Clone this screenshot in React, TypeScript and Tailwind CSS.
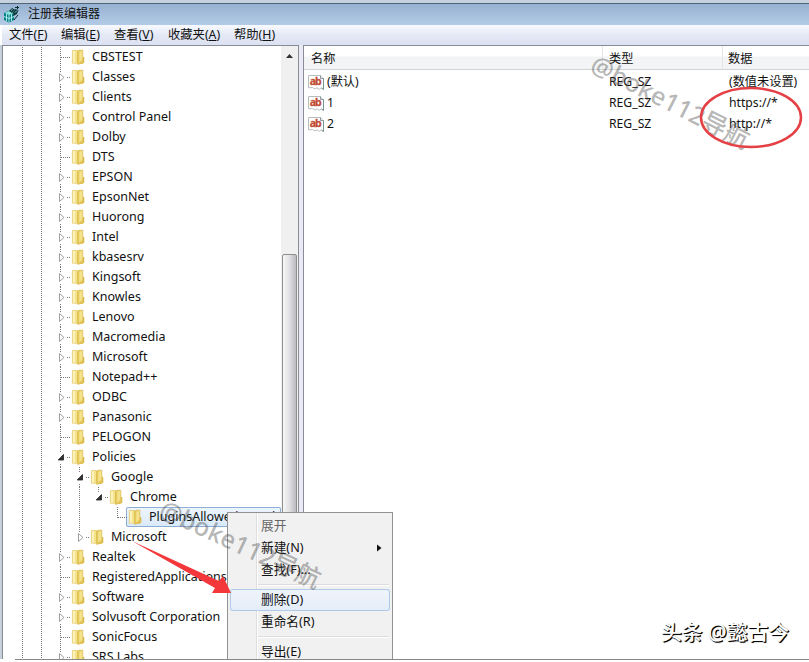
import { clsx } from 'clsx'

interface TreeNode {
  label: string
  depth?: number
  state?: 'open' | 'closed'
  selected?: boolean
  last?: boolean
}

const nodes: TreeNode[] = [
  { label: 'CBSTEST' },
  { label: 'Classes', state: 'closed' },
  { label: 'Clients', state: 'closed' },
  { label: 'Control Panel', state: 'closed' },
  { label: 'Dolby', state: 'closed' },
  { label: 'DTS' },
  { label: 'EPSON', state: 'closed' },
  { label: 'EpsonNet', state: 'closed' },
  { label: 'Huorong', state: 'closed' },
  { label: 'Intel', state: 'closed' },
  { label: 'kbasesrv', state: 'closed' },
  { label: 'Kingsoft', state: 'closed' },
  { label: 'Knowles', state: 'closed' },
  { label: 'Lenovo', state: 'closed' },
  { label: 'Macromedia', state: 'closed' },
  { label: 'Microsoft', state: 'closed' },
  { label: 'Notepad++' },
  { label: 'ODBC', state: 'closed' },
  { label: 'Panasonic', state: 'closed' },
  { label: 'PELOGON' },
  { label: 'Policies', state: 'open' },
  { label: 'Google', depth: 1, state: 'open' },
  { label: 'Chrome', depth: 2, state: 'open', last: true },
  { label: 'PluginsAllowedForUrl', depth: 3, selected: true, last: true },
  { label: 'Microsoft', depth: 1, state: 'closed', last: true },
  { label: 'Realtek', state: 'closed' },
  { label: 'RegisteredApplications' },
  { label: 'Software', state: 'closed' },
  { label: 'Solvusoft Corporation', state: 'closed' },
  { label: 'SonicFocus' },
  { label: 'SRS Labs', state: 'closed' },
]

const values = [
  { name: '(默认)', type: 'REG_SZ', data: '(数值未设置)' },
  { name: '1', type: 'REG_SZ', data: 'https://*' },
  { name: '2', type: 'REG_SZ', data: 'http://*' },
]

const menus = [
  { label: '文件', hotkey: 'F', width: 'w-[52px]' },
  { label: '编辑', hotkey: 'E', width: 'w-[53px]' },
  { label: '查看', hotkey: 'V', width: 'w-[54px]' },
  { label: '收藏夹', hotkey: 'A', width: 'w-[66px]' },
  { label: '帮助', hotkey: 'H', width: 'w-[60px]' },
]

function RegeditIcon() {
  return (
    <svg width="17" height="17" viewBox="0 0 17 17" className="shrink-0">
      <path d="M1 7 6 4.5 11 7V14L6 16.5 1 14Z" fill="#087f83" />
      <path d="M1.5 7 6 5 10.5 7 6 9Z" fill="#8de3de" />
      <path d="M1 10.5 6 12.5 11 10.5M3.5 8V15M6 9V16M8.5 8V15" stroke="#c7ffff" strokeWidth=".8" fill="none" />
      <path d="M6 5 9 2 11.5 3.5 9 7ZM10 6 12 3 15.5 4 14 8 10.5 10Z" fill="#163d40" />
      <path d="M8 4.5 9.5 3.5M12 6.5 14 4.5" stroke="#70cccc" />
      <path d="M14.5 0V3M12 1.5H16M11 14 15 9" stroke="#082b2f" />
    </svg>
  )
}

function FolderIcon() {
  return (
    <svg width="14" height="16" viewBox="0 0 14 16" className="shrink-0">
      <path d="M1.4 1.5H6.5V14.2H1.4Z" fill="#f5e389" stroke="#e6cd75" strokeWidth=".8" />
      <path d="M2 2H4V13.8H2Z" fill="#fbf2bd" />
      <path d="M6.5 2.5 8 1.2H11.8V13L8 15.2H6.5Z" fill="#e6c95b" stroke="#dabb50" strokeWidth=".7" />
      <path d="M8.2 2.8 11.3 1.8V10.5L8.2 13.5Z" fill="#f4e28c" />
      <path d="M11.8 8H13.3V13.8L11 15H8.3L11.8 13Z" fill="#dcbc4a" />
    </svg>
  )
}

function StringIcon() {
  return (
    <svg width="17" height="17" viewBox="0 0 17 17" className="shrink-0">
      <path d="M.5 1.5H12.5L15.5 4.5V15.5L13.5 14 11.5 15.3 9 13.8 7 15 4.5 13.5 .5 13.8Z" fill="#fff" stroke="#b9bcbc" />
      <path d="M12.5 1.5V4.5H15.5" fill="#e9eeee" stroke="#8d9898" />
      <path d="M15.5 4.5V15.5L13.5 14" fill="none" stroke="#79958f" />
      <text x="1.7" y="10.5" fill="#bf4c35" stroke="#bf4c35" strokeWidth=".3" fontSize="10.5" fontWeight="700" fontFamily="Noto Sans, sans-serif" textLength="12">
        ab
      </text>
    </svg>
  )
}

function Expander({ state }: { state?: 'open' | 'closed' }) {
  return (
    <svg width="14" height="20" viewBox="0 0 14 20" className="shrink-0">
      <path d={state ? 'M10 10.5H14' : 'M4 10.5H14'} stroke="#777" strokeDasharray="1 1" />
      {state === 'closed' && <path d="M2.5 6.5V14.5L7 10.5Z" fill="#fff" stroke="#a0a0a0" />}
      {state === 'open' && <path d="M6.5 7.5V13H1.2Z" fill="#333" stroke="#222" strokeWidth=".8" />}
    </svg>
  )
}

// Dotted lines of the ancestors, left of the node's own branch
function Guides({ depth }: { depth: number }) {
  return (
    <svg width={54 + depth * 19} height="20" className="shrink-0">
      <path d="M19.5 0V20M38.5 0V20" stroke="#777" strokeDasharray="1 1" />
      {depth > 0 && <path d="M57.5 0V20" stroke="#777" strokeDasharray="1 1" />}
      {depth > 1 && <path d="M76.5 0V20" stroke="#777" strokeDasharray="1 1" />}
    </svg>
  )
}

function branchPath(node: TreeNode) {
  if (node.state) return node.last ? 'M1.5 0V5' : 'M1.5 0V5M1.5 17V20'
  return node.last ? 'M1.5 0V11' : 'M1.5 0V20'
}

function TreeRow({ node }: { node: TreeNode }) {
  return (
    <div className="flex h-5 shrink-0 items-center whitespace-nowrap">
      <Guides depth={node.depth ?? 0} />
      <div className="relative flex shrink-0">
        <Expander state={node.state} />
        <svg width="3" height="20" className="absolute left-0.5 top-0">
          <path d={branchPath(node)} stroke="#777" strokeDasharray="1 1" />
        </svg>
      </div>
      <div
        className={clsx(
          'flex h-5 items-center',
          node.selected &&
            '-ml-0.5 w-[180px] rounded-[2px] bg-linear-to-b from-[#eff6fd] to-[#d8e9fa] pl-0.5 shadow-[inset_0_0_0_1px_#8caed3]',
        )}
      >
        <FolderIcon />
        <span className="ml-[7px]">{node.label}</span>
      </div>
    </div>
  )
}

function ScrollBar() {
  return (
    <div className="flex w-[17px] shrink-0 flex-col items-center bg-[#f0f0f0]">
      <svg width="17" height="208" className="shrink-0">
        <path d="M5 12 8.5 8 12 12Z" fill="#333" />
      </svg>
      <div className="w-[15px] flex-1 rounded-t-[2px] border border-[#8e8e8e] bg-linear-to-r from-[#f7f7f7] via-[#e0e0e2] to-[#bbbbc0]" />
    </div>
  )
}

interface ContextItemProps {
  label: string
  disabled?: boolean
  submenu?: boolean
  hot?: boolean
}

function ContextItem({ label, disabled, submenu, hot }: ContextItemProps) {
  return (
    <div
      className={clsx(
        'mx-px flex h-[22px] shrink-0 items-center justify-between rounded-[3px] pl-[31px] pr-2',
        disabled && 'text-[#666]',
        hot && 'bg-linear-to-b from-[#f0f4fa] to-[#e3edf9] shadow-[inset_0_0_0_1px_#aecae8]',
      )}
    >
      <span>{label}</span>
      {submenu && (
        <svg width="5" height="8">
          <path d="M0 0.5 4.5 4 0 7.5Z" fill="#111" />
        </svg>
      )}
    </div>
  )
}

function Separator() {
  return (
    <div className="ml-[29px] mr-0.5 flex h-2 shrink-0 flex-col justify-center">
      <div className="h-0.5 border-b border-t border-b-white border-t-[#dcdcdc]" />
    </div>
  )
}

function ContextMenu() {
  return (
    <div className="absolute left-[227px] top-[512px] flex h-[147px] w-[166px] flex-col overflow-hidden border border-b-0 border-[#929292] bg-[#f1f1f1] bg-[linear-gradient(to_right,transparent_28px,#dedede_28px,#dedede_29px,#fff_29px,#fff_30px,transparent_30px)] px-px pt-[2px] text-[12.7px]">
      <ContextItem label="展开" disabled />
      <ContextItem label="新建(N)" submenu />
      <ContextItem label="查找(F)..." />
      <Separator />
      <ContextItem label="删除(D)" hot />
      <ContextItem label="重命名(R)" />
      <Separator />
      <ContextItem label="导出(E)" />
    </div>
  )
}

function Watermark({ className }: { className: string }) {
  return (
    <div
      className={clsx(
        'pointer-events-none absolute origin-top-left whitespace-nowrap text-[25px] font-medium leading-[30px] text-[#444]/40',
        className,
      )}
    >
      @boke112导航
    </div>
  )
}

export default function App() {
  return (
    <div className="relative flex h-[662px] w-[809px] flex-col overflow-hidden bg-white font-['Noto_Sans','Noto_Sans_CJK_SC',sans-serif] text-[12.5px] text-[#111]">
      <header className="flex h-[25px] shrink-0 items-center border-t-[3px] border-[#c6d2df] bg-linear-to-b from-[#95b0d0] to-[#b3cbe6] pl-[3px] shadow-[inset_0_1px_0_#536579]">
        <RegeditIcon />
        <h1 className="ml-2 text-[12px]">注册表编辑器</h1>
      </header>
      <nav className="ml-0.5 flex h-[20px] shrink-0 items-center bg-linear-to-b from-[#f8faff] via-[#e4e9f6] to-[#dce1f1] pl-[7px] text-[12.3px]">
        {menus.map((menu) => (
          <div key={menu.hotkey} className={clsx('shrink-0 whitespace-nowrap', menu.width)}>
            {menu.label}(<span className="underline">{menu.hotkey}</span>)
          </div>
        ))}
      </nav>
      <main className="flex h-[614px] shrink-0 border-l-2 border-[#c5cfdd] bg-[#e9eaf4]">
        <section className="flex w-[297px] shrink-0 overflow-hidden border border-b-0 border-[#888c96] bg-white">
          <div className="flex min-w-0 flex-1 flex-col overflow-hidden pt-px">
            {nodes.map((node, i) => (
              <TreeRow key={i} node={node} />
            ))}
          </div>
          <ScrollBar />
        </section>
        <section className="ml-1 flex min-w-0 flex-1 flex-col border-l border-t border-[#888c96] bg-white">
          <div className="flex h-6 shrink-0 border-b border-[#d2d4d4] bg-linear-to-b from-white from-40% to-[#f3f4f5] to-50% text-[12.2px] leading-[26px]">
            <div className="w-[298px] shrink-0 pl-[7px]">名称</div>
            <div className="w-[120px] shrink-0 border-l border-[#e3e5e6] pl-[6px]">类型</div>
            <div className="flex-1 border-l border-[#e3e5e6] pl-[5px]">数据</div>
          </div>
          <div className="flex flex-col pt-0.5">
            {values.map((value) => (
              <div key={value.name} className="flex h-[21px] shrink-0 items-center whitespace-nowrap text-[12.2px]">
                <div className="flex w-[305px] shrink-0 items-center pl-1">
                  <StringIcon />
                  <span className="ml-0.5">{value.name}</span>
                </div>
                <div className="w-[120px] shrink-0">{value.type}</div>
                <div>{value.data}</div>
              </div>
            ))}
          </div>
        </section>
      </main>
      <footer className="ml-[15px] flex-1 border-t border-[#888] bg-white" />

      <ContextMenu />
      <Watermark className="left-[600px] top-[48px] rotate-[27deg]" />
      <Watermark className="left-[168px] top-[493px] rotate-[25deg]" />

      {/* red annotations */}
      <svg width="809" height="662" className="pointer-events-none absolute inset-0">
        <ellipse cx="751" cy="117.5" rx="50" ry="29.5" fill="none" stroke="#e44046" strokeWidth="2.5" />
        <path d="M132 541 219 581 223 576 231 593 212 593 215 588Z" fill="#f3373b" />
      </svg>
      <div className="absolute left-[661px] top-[619px] whitespace-nowrap text-[20.8px] font-medium leading-[26px] text-white [text-shadow:1px_1px_1px_#000,1px_1px_0_#222]">
        头条 @懿古今
      </div>
    </div>
  )
}
